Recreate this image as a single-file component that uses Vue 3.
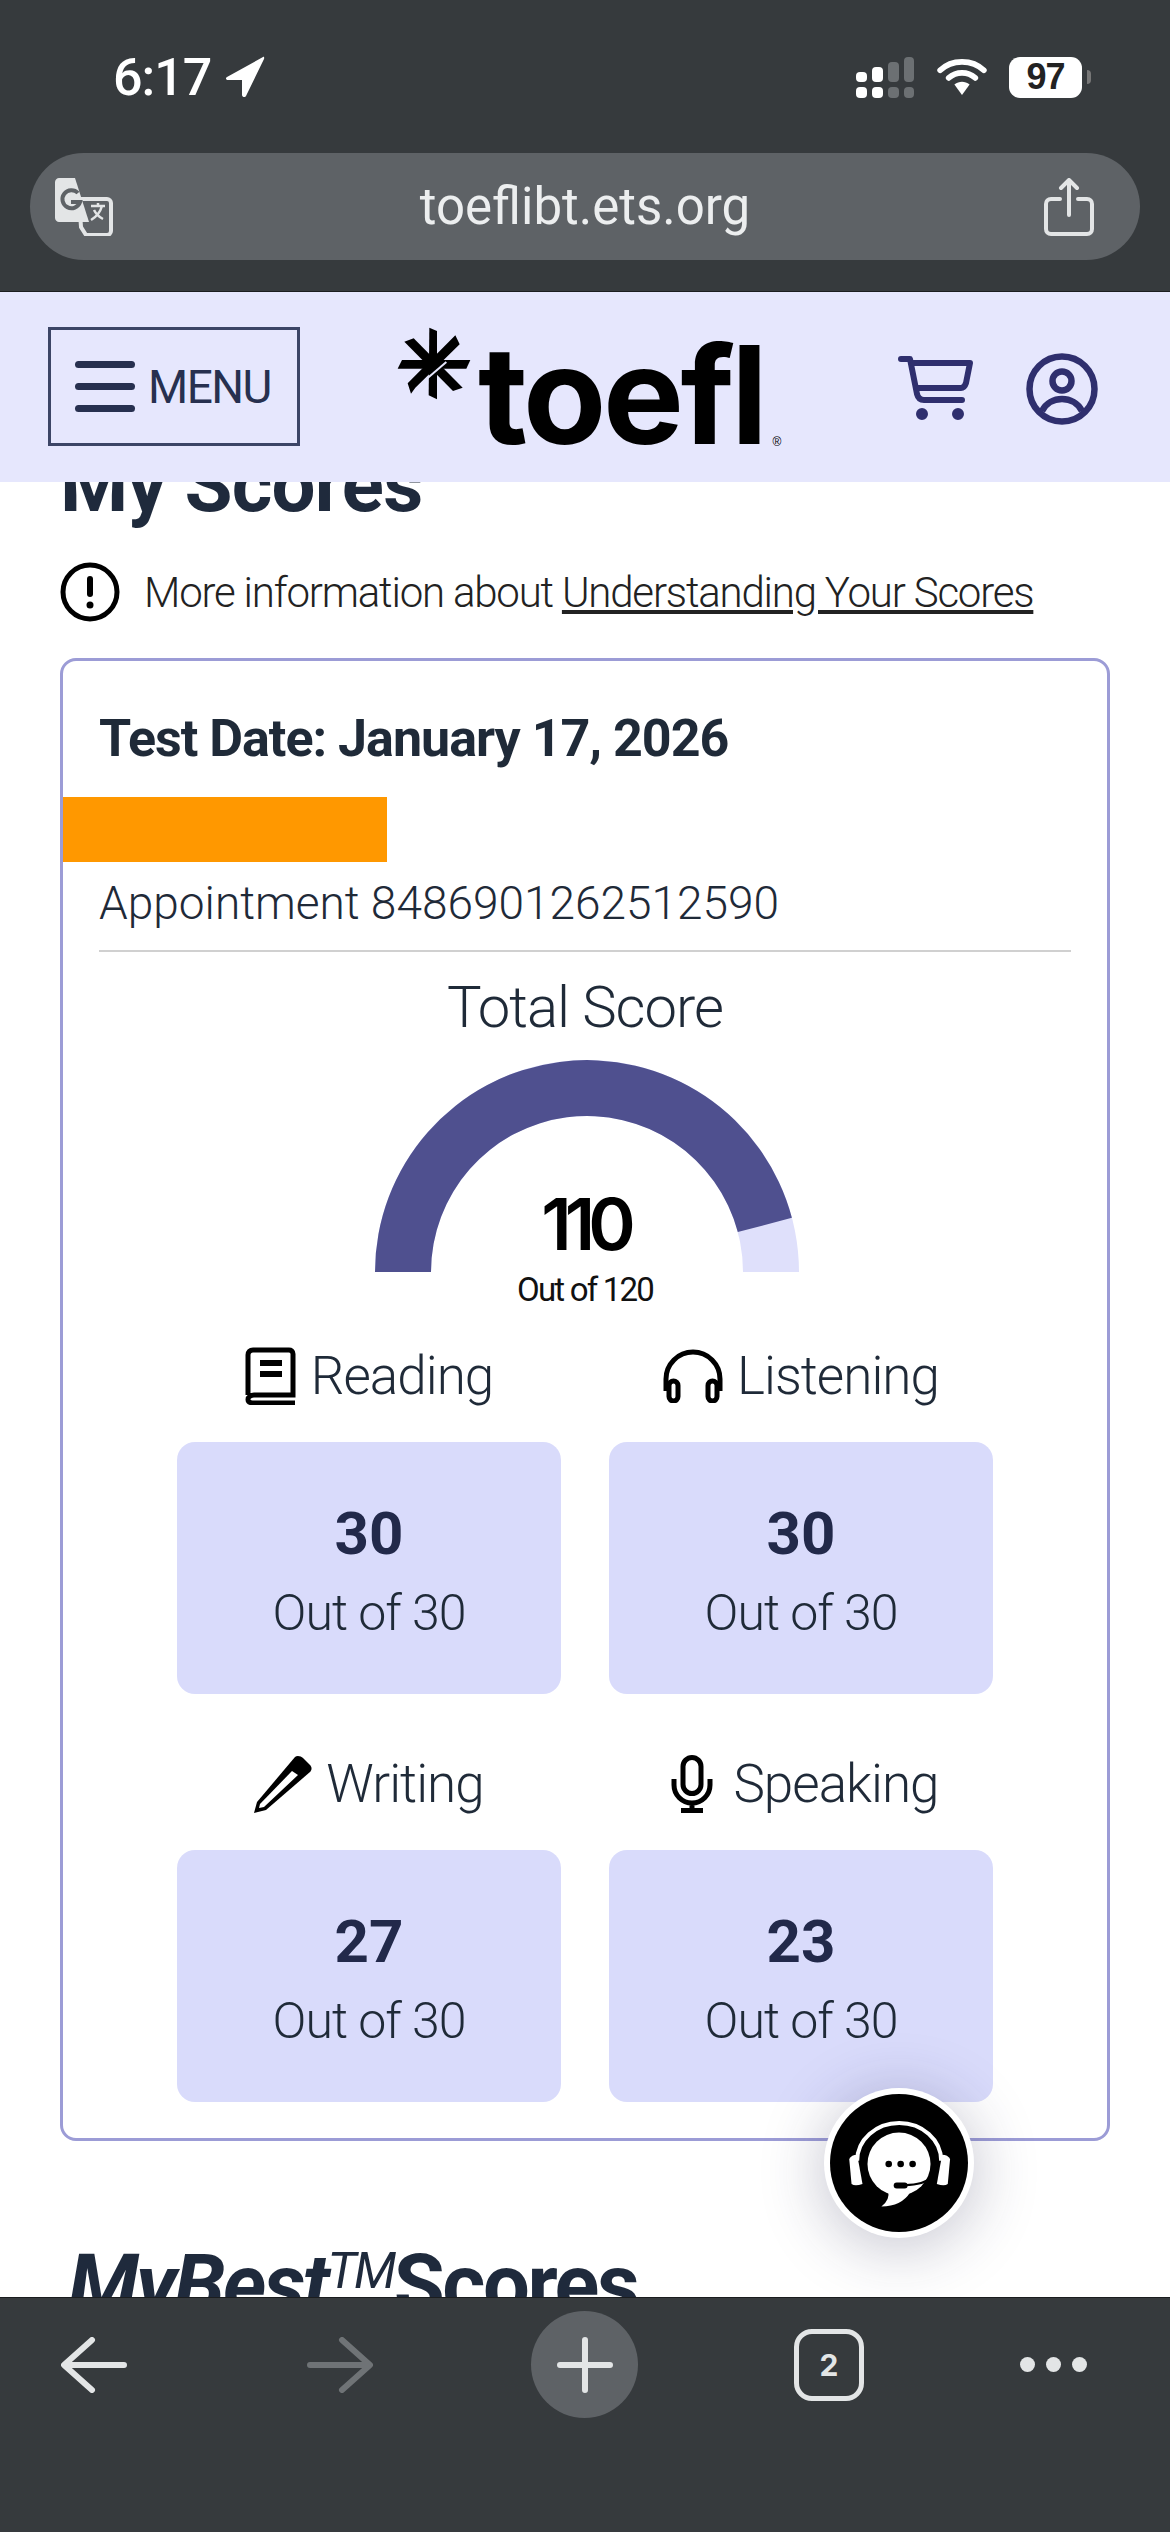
<template>
  <div class="phone">
    <header class="browser-top">
      <div class="status">
        <div class="clock">
          <span>6:17</span>
          <svg width="40" height="42" viewBox="0 0 40 42"><path d="M38 1 2 21c-2 1-1 3 1 3h14v15c0 2 3 3 4 1L39 3c.6-1.500-.2-2.600-1-2z" fill="#fff"/></svg>
        </div>
        <div class="status-right">
          <svg width="59" height="41" viewBox="0 0 59 41">
            <g fill="#fff">
              <rect x="0" y="15" width="11" height="10" rx="4"/><rect x="0" y="30" width="11" height="11" rx="4"/>
              <rect x="16" y="10" width="11" height="15" rx="4"/><rect x="16" y="30" width="11" height="11" rx="4"/>
            </g>
            <g fill="#6c7073">
              <rect x="32" y="5" width="11" height="20" rx="4"/><rect x="32" y="30" width="11" height="11" rx="4"/>
              <rect x="48" y="0" width="10" height="25" rx="4"/><rect x="48" y="30" width="10" height="11" rx="4"/>
            </g>
          </svg>
          <svg width="50" height="38" viewBox="0 0 52 40">
            <g fill="none" stroke="#fff" stroke-width="6" stroke-linecap="round">
              <path d="M3 13C15 1 37 1 49 13"/>
              <path d="M12 21c8-7 20-7 28 0"/>
            </g>
            <path d="M18 28c5-4 11-4 16 0l-8 11z" fill="#fff"/>
          </svg>
          <div class="battery"><span>97</span></div>
          <i class="battery-tip"></i>
        </div>
      </div>
      <div class="url-bar">
        <svg width="58" height="58" viewBox="0 0 58 58">
          <path d="M24 21h28c2 0 4 2 4 4v28c0 2-2 4-4 4H31l-5-8z" fill="#5e6266" stroke="#e3e5e6" stroke-width="4"/>
          <path d="M4 0h16l14 44H4c-2 0-4-2-4-4V4c0-2 2-4 4-4z" fill="#e3e5e6"/>
          <path d="M23 15a9 9 0 1 0 2 9H16" fill="none" stroke="#5e6266" stroke-width="4"/>
          <path d="M36 28h14M43 25v3M47 28c-2 7-6 11-11 14M39 32c2 4 5 7 9 9" fill="none" stroke="#e3e5e6" stroke-width="2.500"/>
        </svg>
        <span class="url">toeflibt.ets.org</span>
        <svg width="50" height="58" viewBox="0 0 50 58" fill="none" stroke="#e3e5e6" stroke-width="4" stroke-linecap="round" stroke-linejoin="round">
          <path d="M16 21H7c-3 0-5 2-5 5v25c0 3 2 5 5 5h36c3 0 5-2 5-5V26c0-3-2-5-5-5h-9"/>
          <path d="M25 37V3M17 10l8-8 8 8"/>
        </svg>
      </div>
    </header>

    <nav class="site-nav">
      <button class="menu-btn">
        <span class="burger"><i></i><i></i><i></i></span>
        MENU
      </button>
      <div class="logo">
        <svg class="logo-mark" width="75" height="75" viewBox="50 50 225 225">
          <g fill="#000">
            <polygon points="147,55 170,65 170,270 145,258"/>
            <polygon points="52,178 65,152 270,152 258,178"/>
            <polygon points="72,97 100,87 247,235 218,245"/>
            <polygon points="225,78 238,105 105,235 92,253 82,222"/>
          </g>
          <path d="M135 212 198 158" stroke="#e6e7fd" stroke-width="6"/>
        </svg>
        <span class="logo-word">toefl</span><span class="logo-r">®</span>
      </div>
      <div class="nav-icons">
        <svg width="76" height="66" viewBox="0 0 76 66" fill="none" stroke="#2f2f6e" stroke-width="6" stroke-linecap="round" stroke-linejoin="round">
          <path d="M3 3h9l7 35c1 4 3 6 7 6h38"/>
          <path d="M15 7h57l-4 20c-1 3-2 5-5 5H20"/>
          <circle cx="24" cy="58" r="3" fill="#2f2f6e"/>
          <circle cx="60" cy="58" r="3" fill="#2f2f6e"/>
        </svg>
        <svg width="72" height="72" viewBox="0 0 72 72" fill="none" stroke="#2f2f6e" stroke-width="6.500">
          <circle cx="36" cy="36" r="32.500"/>
          <circle cx="36" cy="28" r="9.500"/>
          <path d="M16 58c4-8 12-12 20-12s16 4 20 12"/>
        </svg>
      </div>
    </nav>

    <main class="content">
      <h1 class="page-title">My Scores</h1>
      <p class="info">
        <svg width="60" height="60" viewBox="0 0 60 60">
          <circle cx="30" cy="30" r="27" fill="none" stroke="#000" stroke-width="5"/>
          <rect x="27" y="14" width="6" height="21" rx="3" fill="#000"/>
          <circle cx="30" cy="43" r="3.500" fill="#000"/>
        </svg>
        <span>More information about <a href="#">Understanding Your Scores</a></span>
      </p>

      <section class="card">
        <h2 class="test-date">Test Date: January 17, 2026</h2>
        <div class="redacted"></div>
        <p class="appt">Appointment 8486901262512590</p>
        <hr />
        <h3 class="total-title">Total Score</h3>
        <div class="gauge">
          <svg width="426" height="212" viewBox="0 0 426 212">
            <path d="M1 212A212 212 0 0 1 425 212H369A156 156 0 0 0 57 212Z" fill="#dfe0fb" />
            <path d="M1 212A212 212 0 0 1 417.900 157.700L363.800 172.100A156 156 0 0 0 57 212Z" fill="#4f508f" />
          </svg>
          <div class="gauge-value">110</div>
        </div>
        <div class="gauge-sub">Out of 120</div>

        <div class="sections">
          <div v-for="s in sections" :key="s.name" class="section">
            <div class="section-label">
              <svg v-if="s.name === 'Reading'" width="52" height="58" viewBox="0 0 52 58" fill="none" stroke="#000" stroke-width="5">
                <path d="M3 48V8c0-3 2-5 5-5h36c2 0 4 1 4 4v41H9c-3 0-6 2-6 4.500S6 56 9 56h41"/>
                <path d="M15 16h22M15 27h22" stroke-width="6"/>
              </svg>
              <svg v-else-if="s.name === 'Listening'" width="60" height="54" viewBox="0 0 60 54" fill="none" stroke="#000" stroke-width="5">
                <path d="M3 42V30a27 27 0 0 1 54 0v12"/>
                <rect x="6" y="32" width="9" height="20" rx="4.500"/>
                <rect x="45" y="32" width="9" height="20" rx="4.500"/>
              </svg>
              <svg v-else-if="s.name === 'Writing'" width="58" height="58" viewBox="0 0 58 58">
                <path d="M41 2 3 47 0 58l12-3L56 17c2-2 2-5 0-7l-7-7c-2-2-6-3-8-1z" fill="#000"/>
                <path d="M38 16 6 49l-1 4 5-1 34-32z" fill="#fff"/>
              </svg>
              <svg v-else width="42" height="58" viewBox="0 0 42 58" fill="none" stroke="#000" stroke-width="5">
                <rect x="12" y="2.500" width="18" height="36" rx="9"/>
                <path d="M3 24v6a18 18 0 0 0 36 0v-6M21 48v7"/>
                <path d="M10 55.500h22" stroke-width="5"/>
              </svg>
              <span>{{ s.name }}</span>
            </div>
            <div class="score-box">
              <strong>{{ s.score }}</strong>
              <span>Out of 30</span>
            </div>
          </div>
        </div>
      </section>

      <h1 class="best-title"><em>MyBest</em><sup>TM</sup>Scores</h1>

      <button class="chat-btn">
        <svg width="138" height="138" viewBox="30 39 416 416">
          <circle cx="238" cy="247" r="208" fill="#000"/>
          <path d="M112 240A125 112 0 0 1 365 240" fill="none" stroke="#fff" stroke-width="12"/>
          <path d="M88 235Q95 222 112 222L128 310Q105 318 95 310Z" fill="#fff"/>
          <path d="M392 235Q385 222 368 222L352 310Q375 318 385 310Z" fill="#fff"/>
          <circle cx="238" cy="250" r="95" fill="#fff"/>
          <path d="M205 330Q212 358 185 378 245 378 272 335Z" fill="#fff"/>
          <circle cx="207" cy="250" r="10"/><circle cx="243" cy="250" r="10"/><circle cx="279" cy="250" r="10"/>
          <path d="M335 290Q315 312 255 314" fill="none" stroke="#000" stroke-width="6"/>
          <rect x="222" y="306" width="42" height="18" rx="9"/>
        </svg>
      </button>
    </main>

    <footer class="browser-bottom">
      <svg width="66" height="56" viewBox="0 0 66 56" fill="none" stroke="#e3e5e6" stroke-width="6" stroke-linecap="round" stroke-linejoin="round">
        <path d="M63 28H4M31 3 3 28l28 25"/>
      </svg>
      <svg class="fwd" width="66" height="56" viewBox="0 0 66 56" fill="none" stroke="#6f7376" stroke-width="6" stroke-linecap="round" stroke-linejoin="round">
        <path d="M3 28h59M35 3l28 25-28 25"/>
      </svg>
      <div class="plus">
        <svg width="56" height="56" viewBox="0 0 56 56" stroke="#e3e5e6" stroke-width="6" stroke-linecap="round">
          <path d="M28 3v50M3 28h50"/>
        </svg>
      </div>
      <div class="tabs">2</div>
      <div class="dots"><i></i><i></i><i></i></div>
    </footer>
  </div>
</template>

<script setup>
const sections = [
  { name: 'Reading', score: 30 },
  { name: 'Listening', score: 30 },
  { name: 'Writing', score: 27 },
  { name: 'Speaking', score: 23 },
]
</script>

<style scoped>
.phone {
  width: 1170px;
  height: 2532px;
  display: flex;
  flex-direction: column;
  overflow: hidden;
  background: #fff;
  font-family: Roboto, "Liberation Sans", sans-serif;
  color: #1f2a38;
}

.browser-top {
  height: 292px;
  flex: none;
  background: #363a3d;
  padding: 49px 30px 0;
  box-sizing: border-box;
  border-bottom: 1px solid #1b1d1f;
}
.status {
  display: flex;
  justify-content: space-between;
  align-items: center;
  height: 56px;
  padding: 0 49px 0 83px;
}
.clock {
  display: flex;
  align-items: center;
  gap: 14px;
  color: #fff;
  font: 500 52px Roboto, sans-serif;
  letter-spacing: -1px;
}
.status-right {
  display: flex;
  align-items: center;
  gap: 22px;
}
.battery {
  width: 73px;
  height: 41px;
  border-radius: 11px;
  background: #fff;
  display: flex;
  align-items: center;
  justify-content: center;
  font: 700 36px "Liberation Sans", sans-serif;
  letter-spacing: -1px;
  color: #222;
}
.battery-tip {
  width: 4px;
  height: 14px;
  margin-left: -17px;
  border-radius: 0 4px 4px 0;
  background: #777;
}
.url-bar {
  margin-top: 48px;
  height: 107px;
  border-radius: 54px;
  background: #5e6266;
  display: flex;
  align-items: center;
  padding: 0 46px 0 25px;
}
.url {
  flex: 1;
  margin-left: 13px;
  text-align: center;
  color: #eceeef;
  font: 400 51px Roboto, sans-serif;
}

.site-nav {
  height: 190px;
  flex: none;
  background: #e6e7fd;
  display: flex;
  align-items: flex-start;
  padding: 35px 72px 0 48px;
  box-sizing: border-box;
  position: relative;
  z-index: 2;
}
.menu-btn {
  width: 252px;
  height: 119px;
  box-sizing: border-box;
  border: 3px solid #3c4566;
  background: none;
  display: flex;
  align-items: center;
  gap: 13px;
  padding: 0 0 0 24px;
  color: #27304f;
  font: 400 46px Roboto, sans-serif;
  letter-spacing: -1.500px;
}
.burger {
  display: flex;
  flex-direction: column;
  gap: 15px;
}
.burger i {
  display: block;
  width: 60px;
  height: 7px;
  border-radius: 4px;
  background: #27304f;
}
.logo {
  display: flex;
  align-items: flex-start;
  margin-left: 97px;
  height: 120px;
}
.logo-mark {
  margin-top: -1px;
}
.logo-word {
  font: 700 136px/120px Inter, sans-serif;
  letter-spacing: -3.500px;
  color: #000;
  margin-left: 6px;
  margin-top: 8px;
}
.logo-r {
  font: 400 12px "Liberation Sans", sans-serif;
  color: #000;
  align-self: flex-end;
  margin-left: 8px;
  margin-bottom: -2px;
}
.nav-icons {
  margin-left: auto;
  display: flex;
  align-items: center;
  gap: 52px;
  padding-top: 26px;
}

.content {
  flex: 1;
  min-height: 0;
  position: relative;
  overflow: hidden;
  padding: 0 60px;
}
.page-title {
  margin: -42px 0 0;
  font: 700 78px/90px Roboto, sans-serif;
  letter-spacing: -.800px;
  color: #1f2a3c;
}
.info {
  display: flex;
  align-items: center;
  gap: 24px;
  margin: 31px 0 0;
  height: 60px;
  font-size: 42px;
  font-weight: 300;
  letter-spacing: -1.200px;
  color: #222;
  padding-top: 1px;
}
.info a {
  color: #222;
}
.card {
  margin-top: 36px;
  height: 1483px;
  box-sizing: border-box;
  border: 3px solid #9c9cd6;
  border-radius: 16px;
  padding: 48px 36px 0;
  text-align: center;
}
.test-date {
  margin: 0;
  text-align: left;
  font-size: 52px;
  line-height: 60px;
  font-weight: 700;
  letter-spacing: -1px;
}
.redacted {
  margin: 28px 0 0 -36px;
  width: 324px;
  height: 65px;
  background: #ff9800;
}
.appt {
  margin: 14px 0 0;
  text-align: left;
  font-size: 46px;
  line-height: 54px;
  font-weight: 300;
}
.card hr {
  margin: 20px 0 0;
  border: 0;
  border-top: 2px solid #d0d0d0;
}
.total-title {
  margin: 22px 0 0;
  font-size: 58px;
  line-height: 66px;
  font-weight: 300;
  letter-spacing: -1px;
}
.gauge {
  position: relative;
  width: 426px;
  height: 212px;
  margin: 20px 0 0 calc(50% - 211px);
}
.gauge svg {
  display: block;
}
.gauge-value {
  position: absolute;
  left: 0;
  right: 4px;
  bottom: 3px;
  font: 600 72px/90px Inter, sans-serif;
  letter-spacing: -7px;
  color: #000;
}
.gauge-sub {
  margin-top: -2px;
  font-size: 33px;
  line-height: 40px;
  font-weight: 400;
  color: #111;
  letter-spacing: -1.800px;
}
.sections {
  display: grid;
  grid-template-columns: 384px 384px;
  column-gap: 48px;
  justify-content: center;
  margin-top: 36px;
}
.section-label {
  display: flex;
  align-items: center;
  justify-content: center;
  gap: 14px;
  height: 60px;
  font-size: 53px;
  font-weight: 300;
  letter-spacing: -1px;
}
.section:last-child .section-label {
  gap: 20px;
  padding-left: 8px;
}
.score-box {
  margin-top: 36px;
  height: 252px;
  border-radius: 18px;
  background: #d9dbfb;
  display: flex;
  flex-direction: column;
  align-items: center;
  justify-content: center;
  gap: 19px;
  padding-top: 5px;
  box-sizing: border-box;
  margin-bottom: 60px;
}
.score-box strong {
  font-size: 60px;
  line-height: 66px;
  font-weight: 700;
  color: #22294a;
}
.score-box span {
  font-size: 50px;
  line-height: 54px;
  font-weight: 300;
  letter-spacing: -1px;
}
.best-title {
  margin: 99px 0 0 8px;
  font: 700 83px/90px Roboto, sans-serif;
  letter-spacing: -2.500px;
  color: #1f2a3c;
  white-space: nowrap;
}
.best-title em {
  font-style: italic;
}
.best-title sup {
  font-size: 50px;
  font-weight: 400;
  font-style: italic;
  vertical-align: 25px;
  line-height: 0;
}

.chat-btn {
  position: absolute;
  left: 830px;
  top: 1612px;
  width: 138px;
  height: 138px;
  padding: 0;
  border: 0;
  border-radius: 50%;
  background: #fff;
  box-shadow: 0 0 0 6px #fff, 0 8px 60px 10px rgba(40, 40, 80, .25);
}
.chat-btn svg {
  display: block;
}

.browser-bottom {
  height: 235px;
  flex: none;
  background: #363a3d;
  box-sizing: border-box;
  border-top: 1px solid #1b1d1f;
  position: relative;
  z-index: 2;
  display: flex;
  align-items: center;
  gap: 156px;
  padding: 0 0 101px 61px;
}
.fwd {
  margin-left: 24px;
}
.plus {
  margin-left: 2px;
  width: 107px;
  height: 107px;
  border-radius: 50%;
  background: #5e6266;
  display: flex;
  align-items: center;
  justify-content: center;
}
.tabs {
  width: 70px;
  height: 72px;
  box-sizing: border-box;
  border: 5px solid #e3e5e6;
  border-radius: 18px;
  display: flex;
  align-items: center;
  justify-content: center;
  color: #e3e5e6;
  font: 700 30px Inter, sans-serif;
}
.dots {
  display: flex;
  gap: 11px;
}
.dots i {
  width: 15px;
  height: 15px;
  border-radius: 50%;
  background: #e3e5e6;
}
</style>
